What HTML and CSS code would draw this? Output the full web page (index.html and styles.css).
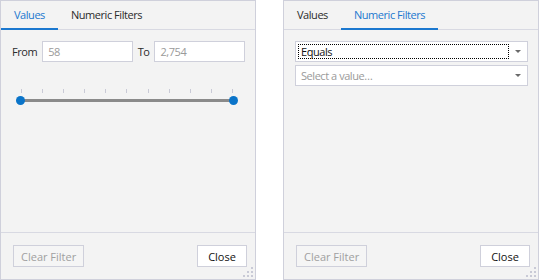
FILE: index.html
```html
<!DOCTYPE html>
<html>
<head>
<meta charset="utf-8">
<link rel="stylesheet" href="styles.css">
</head>
<body>
<div class="stage">
  <div class="panel">
    <div class="tabs">
      <div class="tab active">Values</div>
      <div class="tab">Numeric Filters</div>
    </div>
    <div class="content">
      <div class="range-row">
        <span class="lbl">From</span>
        <div class="input">58</div>
        <span class="lbl">To</span>
        <div class="input">2,754</div>
      </div>
      <div class="slider">
        <div class="ticks">
          <span></span><span></span><span></span><span></span><span></span><span></span><span></span><span></span><span></span><span></span><span></span>
        </div>
        <div class="track">
          <span class="thumb left"></span>
          <span class="thumb right"></span>
        </div>
      </div>
    </div>
    <div class="footer">
      <button class="btn disabled">Clear Filter</button>
      <button class="btn close">Close</button>
      <span class="grip"><i class="d1"></i><i class="d2"></i><i class="d3"></i><i class="d4"></i><i class="d5"></i><i class="d6"></i></span>
    </div>
  </div>

  <div class="panel">
    <div class="tabs">
      <div class="tab">Values</div>
      <div class="tab active">Numeric Filters</div>
    </div>
    <div class="content combos">
      <div class="combo">
        <span class="combo-text focused">Equals</span>
        <span class="arrow"></span>
      </div>
      <div class="combo">
        <span class="combo-text placeholder">Select a value…</span>
        <span class="arrow"></span>
      </div>
    </div>
    <div class="footer">
      <button class="btn disabled">Clear Filter</button>
      <button class="btn close">Close</button>
      <span class="grip"><i class="d1"></i><i class="d2"></i><i class="d3"></i><i class="d4"></i><i class="d5"></i><i class="d6"></i></span>
    </div>
  </div>
</div>
</body>
</html>
```

FILE: styles.css
```css
* { box-sizing: border-box; }
html, body { margin: 0; padding: 0; background: #ffffff; }
body {
  font-family: "Open Sans", "Noto Sans", "Liberation Sans", sans-serif;
  font-size: 11px;
  letter-spacing: -0.45px;
  color: #333333;
}
.stage {
  display: flex;
  gap: 27px;
}
.panel {
  width: 256px;
  height: 280px;
  border: 1px solid #cfd0db;
  background: #f3f3f3;
  display: flex;
  flex-direction: column;
}
.tabs {
  display: flex;
  height: 29px;
  border-bottom: 1px solid #d8d9e2;
}
.tab {
  padding: 0 13px;
  line-height: 27px;
  height: 29px;
  border-bottom: 2px solid transparent;
  color: #2b2b2b;
  white-space: nowrap;
}
.tab.active {
  color: #1b78cf;
  border-bottom-color: #1b78cf;
}
.content {
  padding: 11px 10px 0 11px;
}
.range-row {
  display: flex;
  align-items: center;
  gap: 5px;
  height: 21px;
}
.lbl { color: #2b2b2b; }
.input {
  flex: 1;
  height: 21px;
  border: 1px solid #cfd0db;
  background: #ffffff;
  color: #9a9a9a;
  padding: 0 5px;
  line-height: 19px;
}
.slider {
  position: relative;
  margin-top: 27px;
  width: 222px;
  margin-left: 4px;
}
.ticks {
  display: flex;
  justify-content: space-between;
  padding: 0 5px;
  height: 4px;
}
.ticks span {
  width: 1px;
  height: 4px;
  background: #c9cad6;
}
.track {
  position: relative;
  margin: 6px 5px 0;
  height: 3px;
  background: #8a8a8a;
}
.thumb {
  position: absolute;
  top: -3px;
  width: 9px;
  height: 9px;
  border-radius: 50%;
  background: #0a74c9;
}
.thumb.left { left: -5px; }
.thumb.right { right: -5px; }

.combos {
  display: flex;
  flex-direction: column;
  gap: 3px;
  padding-right: 10px;
}
.combo {
  display: flex;
  align-items: center;
  height: 21px;
  border: 1px solid #cfd0db;
  background: #ffffff;
  padding: 2px 0 2px 2px;
}
.combo-text {
  flex: 1;
  height: 15px;
  line-height: 13px;
  padding: 0 2px;
  border: 1px dotted transparent;
  color: #111;
}
.combo-text.focused { border-color: #000; }
.combo-text.placeholder { color: #9a9a9a; }
.arrow {
  width: 18px;
  display: flex;
  justify-content: center;
}
.arrow::before {
  content: "";
  border-left: 3.5px solid transparent;
  border-right: 3.5px solid transparent;
  border-top: 3px solid #6a6a6a;
}

.footer {
  margin-top: auto;
  height: 47px;
  border-top: 1px solid #d8d9e2;
  display: flex;
  justify-content: space-between;
  align-items: flex-start;
  padding: 12px 8px 0 12px;
  position: relative;
}
.btn {
  font: inherit;
  height: 22px;
  border: 1px solid #cfd0db;
  background: #ffffff;
  color: #111;
  padding: 0 9px;
  margin: 0;
}
.btn.close {
  min-width: 50px;
}
.btn.disabled {
  padding: 0 7px;
  background: #f5f5f5;
  color: #a0a0a0;
}
.grip {
  position: absolute;
  right: 2px;
  bottom: 2px;
  width: 10px;
  height: 10px;
}
.grip i {
  position: absolute;
  width: 2px;
  height: 2px;
  background: #c9cad6;
}
.grip .d1 { right: 0; top: 0; }
.grip .d2 { right: 0; top: 4px; }
.grip .d3 { right: 4px; top: 4px; }
.grip .d4 { right: 0; top: 8px; }
.grip .d5 { right: 4px; top: 8px; }
.grip .d6 { right: 8px; top: 8px; }
```
